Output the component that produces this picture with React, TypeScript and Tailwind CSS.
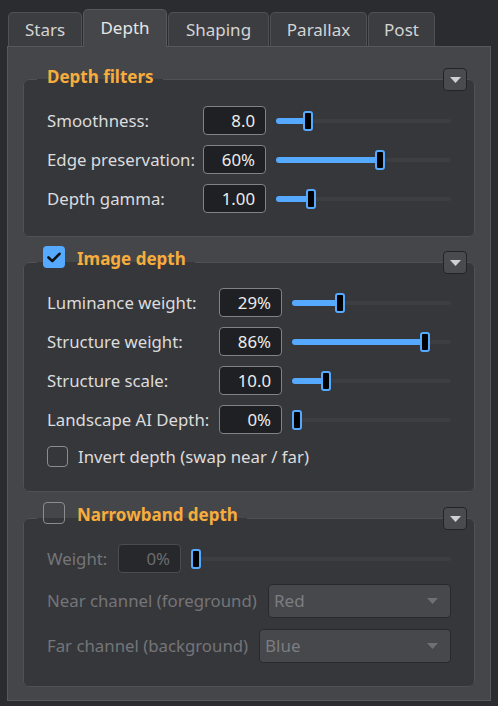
import type { ReactNode } from "react";

const tabs = [
  { name: "Stars", w: "w-[74px]" },
  { name: "Depth", w: "w-[84px]", active: true },
  { name: "Shaping", w: "w-[101px]" },
  { name: "Parallax", w: "w-[97px]" },
  { name: "Post", w: "w-[67px]" },
];

function CollapseButton({ top }: { top: string }) {
  return (
    <div
      className={`absolute right-[8px] ${top} flex h-[23px] w-[24px] items-center justify-center rounded-[4px] border border-[#222326] bg-[#4a4b4f]`}
    >
      <svg width="11" height="6" viewBox="0 0 11 6">
        <path d="M0 0h11L5.5 6z" fill="#cfd0d2" />
      </svg>
    </div>
  );
}

function CheckBox({ checked, size = "h-[22px] w-[22px]" }: { checked?: boolean; size?: string }) {
  if (checked) {
    return (
      <div className={`${size} flex shrink-0 items-center justify-center rounded-[4px] bg-[#55a9ff]`}>
        <svg width="14" height="11" viewBox="0 0 14 11">
          <path d="M1.5 5.5l3.8 3.6L12.5 1.8" fill="none" stroke="#111" strokeWidth="2.6" strokeLinecap="round" strokeLinejoin="round" />
        </svg>
      </div>
    );
  }
  return <div className={`${size} shrink-0 rounded-[4px] border-[1.5px] border-[#8b8c8f]`} />;
}

function Slider({ value }: { value: number }) {
  return (
    <div className="relative h-[20px] flex-1">
      <div className="absolute inset-x-0 top-[8px] h-[4px] rounded-full bg-[#3d3e42]" />
      <div
        className="absolute left-0 top-[7px] h-[6px] rounded-full bg-[#55a9ff]"
        style={{ width: `calc(${value} * (100% - 10px) + 5px)` }}
      />
      <div
        className="absolute top-0 h-[20px] w-[10px] rounded-[3px] border-2 border-[#55a9ff] bg-black"
        style={{ left: `calc(${value} * (100% - 10px))` }}
      />
    </div>
  );
}

function SliderRow({
  label,
  value,
  pos,
  labelW,
  disabled,
}: {
  label: string;
  value: string;
  pos: number;
  labelW: string;
  disabled?: boolean;
}) {
  return (
    <div className="flex h-[29px] items-center gap-[10px]">
      <span className={`${labelW} shrink-0 whitespace-nowrap ${disabled ? "text-[#747578]" : "text-[#dcdcdc]"}`}>
        {label}
      </span>
      <div
        className={`flex h-[29px] w-[63px] shrink-0 items-center justify-end rounded-[4px] border pr-[10px] ${
          disabled
            ? "border-[#4b4c50] bg-[#27282b] text-[#6c6d70]"
            : "border-[#818285] bg-[#1f2023] text-[#ececec]"
        }`}
      >
        {value}
      </div>
      <Slider value={pos} />
    </div>
  );
}

function Combo({ label, value, labelW }: { label: string; value: string; labelW: string }) {
  return (
    <div className="flex h-[34px] items-center gap-[10px]">
      <span className={`${labelW} shrink-0 whitespace-nowrap text-[#747578]`}>{label}</span>
      <div className="flex h-[34px] flex-1 items-center justify-between rounded-[4px] border border-[#28292c] bg-[#47484c] pl-[5px] pr-[12px] text-[17px] text-[#7c7d80]">
        <span>{value}</span>
        <svg width="11" height="6" viewBox="0 0 11 6">
          <path d="M0 0h11L5.5 6z" fill="#6f7073" />
        </svg>
      </div>
    </div>
  );
}

function Group({
  title,
  checkable,
  checked,
  margin,
  children,
}: {
  title: string;
  checkable?: boolean;
  checked?: boolean;
  margin: string;
  children: ReactNode;
}) {
  return (
    <div className={`relative ${margin}`}>
      <fieldset className="rounded-[6px] border border-[#505155] bg-[#36373b]">
        {checkable ? (
          <legend className="ml-[13px] flex h-[32px] items-start gap-[12px] pl-[6px] pr-[9px]">
            <CheckBox checked={checked} />
            <span className="text-[17px] font-bold leading-[25px] text-[#f7ad3c]">{title}</span>
          </legend>
        ) : (
          <legend className="ml-[13px] flex h-[24px] items-start pl-[10px] pr-[9px]">
            <span className="text-[17px] font-bold leading-[20px] text-[#f7ad3c]">{title}</span>
          </legend>
        )}
        {children}
      </fieldset>
      <CollapseButton top={checkable ? "top-[5px]" : "top-[1px]"} />
    </div>
  );
}

export default function App() {
  return (
    <div className="h-[706px] w-[498px] bg-[#2b2c30] pt-[9px] font-['Noto_Sans',sans-serif] text-[16.8px]">
      {/* Tabs */}
      <div className="flex h-[37px] items-end gap-[1px] pl-[8px]">
        {tabs.map((t) =>
          t.active ? (
            <div
              key={t.name}
              className={`${t.w} relative z-10 -mb-px flex h-[38px] items-center justify-center rounded-t-[5px] border border-b-0 border-[#57585c] bg-[#45464a] pb-[2px] text-[17px] text-[#e6e6e6]`}
            >
              {t.name}
            </div>
          ) : (
            <div
              key={t.name}
              className={`${t.w} flex h-[34px] items-center justify-center rounded-t-[5px] border border-b-0 border-[#505155] bg-[#3c3d41] text-[17px] text-[#d4d4d4]`}
            >
              {t.name}
            </div>
          ),
        )}
      </div>

      {/* Panel */}
      <div className="ml-[7px] h-[655px] w-[484px] border border-[#57585c] bg-[#45464a] px-[15px] pt-[20px]">
        <Group title="Depth filters" margin="">
          <div className="flex flex-col gap-[10px] px-[23px] pb-[23px] pt-[15px]">
            <SliderRow label="Smoothness:" value="8.0" pos={0.163} labelW="w-[146px]" />
            <SliderRow label="Edge preservation:" value="60%" pos={0.6} labelW="w-[146px]" />
            <SliderRow label="Depth gamma:" value="1.00" pos={0.18} labelW="w-[146px]" />
          </div>
        </Group>

        <Group title="Image depth" checkable checked margin="mt-[9px]">
          <div className="flex flex-col px-[23px] pb-[24px] pt-[10px]">
            <div className="flex flex-col gap-[10px]">
              <SliderRow label="Luminance weight:" value="29%" pos={0.29} labelW="w-[162px]" />
              <SliderRow label="Structure weight:" value="86%" pos={0.86} labelW="w-[162px]" />
              <SliderRow label="Structure scale:" value="10.0" pos={0.193} labelW="w-[162px]" />
              <SliderRow label="Landscape AI Depth:" value="0%" pos={0} labelW="w-[162px]" />
            </div>
            <div className="mt-[12px] flex h-[21px] items-center gap-[10px] text-[#dcdcdc]">
              <CheckBox size="h-[21px] w-[21px]" />
              <span>Invert depth (swap near / far)</span>
            </div>
          </div>
        </Group>

        <Group title="Narrowband depth" checkable margin="mt-[10px]">
          <div className="flex flex-col gap-[11px] px-[23px] pb-[23px] pt-[10px]">
            <SliderRow label="Weight:" value="0%" pos={0} labelW="w-[61px]" disabled />
            <Combo label="Near channel (foreground)" value="Red" labelW="w-[211px]" />
            <Combo label="Far channel (background)" value="Blue" labelW="w-[202px]" />
          </div>
        </Group>
      </div>
    </div>
  );
}
